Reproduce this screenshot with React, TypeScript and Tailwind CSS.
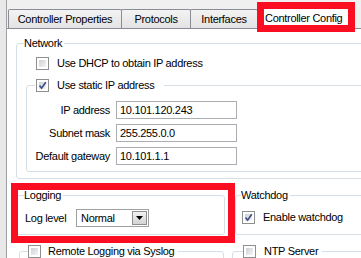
import React from "react";

const Check = ({ checked }: { checked?: boolean }) => (
  <div className="relative w-[13px] h-[13px] shrink-0 border border-[#8e8f8f] bg-white p-[2px]">
    <div className="w-full h-full bg-linear-to-br from-[#cdd0d5] to-[#f5f5f5]" />
    {checked && (
      <svg className="absolute left-0 top-0" width="11" height="11" viewBox="0 0 11 11">
        <path d="M2.5 5.5 L4.6 8.2 L8.8 2.3" fill="none" stroke="#3c5187" strokeWidth="1.7" />
      </svg>
    )}
  </div>
);

const Field = ({ label, value }: { label: string; value: string }) => (
  <div className="flex items-center h-[18px]">
    <span className="w-[83px] text-right">{label}</span>
    <div className="ml-[6px] w-[121px] h-[18px] border border-[#abadb3] bg-white pl-[3px] flex items-center">
      {value}
    </div>
  </div>
);

const Tab = ({ label, w }: { label: string; w: string }) => (
  <div
    className={`${w} h-[19px] -mr-px border border-b-0 border-[#898c95] rounded-t-[2px] bg-linear-to-b from-[#f3f3f3] to-[#e3e3e3] flex items-center justify-center`}
  >
    {label}
  </div>
);

export default function App() {
  return (
    <div className="relative w-[361px] h-[258px] overflow-hidden bg-[#f0f0f0] text-black text-[11px] leading-[13px] tracking-[-0.3px] font-['Liberation_Sans',Arial,sans-serif]">
      <div className="flex h-full">
        <div className="w-[7px] shrink-0 border-r border-[#a0a0a0] bg-[#e8e8e8]" />
        <div className="flex-1 flex flex-col min-w-0">
          <div className="h-[28px] shrink-0 flex items-end pl-[1px]">
            <Tab label="Controller Properties" w="w-[114px]" />
            <Tab label="Protocols" w="w-[70px]" />
            <Tab label="Interfaces" w="w-[68px]" />
            <div className="w-[98px] h-[23px] -mb-px border border-b-0 border-[#898c95] bg-white flex items-center pl-[7px]">
              Controller Config
            </div>
          </div>
          <div className="flex-1 bg-white border-t border-[#898c95] overflow-hidden">
            <div className="w-[420px]">
              {/* Network */}
              <fieldset className="ml-[9px] mt-[8px] border border-[#d5dfe5] rounded-[3px] pb-[6px]">
                <legend className="ml-[7px] pr-[2px]">Network</legend>
                <div className="mt-[7px] pl-[19px] flex items-center gap-[8px]">
                  <Check />
                  <span>Use DHCP to obtain IP address</span>
                </div>
                <fieldset className="ml-[9px] mt-[9px] border border-[#d5dfe5] rounded-[3px] pb-[6px]">
                  <legend className="ml-[8px] pl-px pr-[10px]">
                    <div className="flex items-center gap-[8px]">
                      <Check checked />
                      <span>Use static IP address</span>
                    </div>
                  </legend>
                  <div className="pt-[9px] flex flex-col gap-[5px]">
                    <Field label="IP address" value="10.101.120.243" />
                    <Field label="Subnet mask" value="255.255.0.0" />
                    <Field label="Default gateway" value="10.101.1.1" />
                  </div>
                </fieldset>
              </fieldset>

              {/* Logging / Watchdog */}
              <div className="flex mt-[10px]">
                <fieldset className="ml-[9px] w-[209px] border border-[#d5dfe5] rounded-[3px] pb-[7px]">
                  <legend className="ml-[7px] pr-[2px]">Logging</legend>
                  <div className="mt-[7px] pl-[8px] flex items-center">
                    <span className="w-[51px]">Log level</span>
                    <div className="w-[73px] h-[18px] border border-[#a0a0a0] bg-white flex items-center pl-[4px] pr-px">
                      <span className="flex-1">Normal</span>
                      <div className="w-[15px] h-[14px] border border-[#8e8f8f] bg-linear-to-b from-[#f2f2f2] to-[#d4d4d4] flex items-center justify-center">
                        <svg width="7" height="4" viewBox="0 0 7 4">
                          <path d="M0 0 H7 L3.5 4 Z" fill="#000" />
                        </svg>
                      </div>
                    </div>
                  </div>
                </fieldset>
                <fieldset className="ml-[10px] flex-1 border border-[#d5dfe5] rounded-[3px]">
                  <legend className="ml-[5px] pr-[2px]">Watchdog</legend>
                  <div className="mt-[9px] pl-[6px] flex items-center gap-[8px]">
                    <Check checked />
                    <span>Enable watchdog</span>
                  </div>
                </fieldset>
              </div>

              {/* Remote logging / NTP */}
              <div className="flex mt-[10px]">
                <fieldset className="ml-[12px] w-[205px] h-[40px] border border-[#d5dfe5] rounded-[3px]">
                  <legend className="ml-[8px] pr-[4px]">
                    <div className="flex items-center gap-[7px]">
                      <Check />
                      <span>Remote Logging via Syslog</span>
                    </div>
                  </legend>
                </fieldset>
                <fieldset className="ml-[8px] flex-1 h-[40px] border border-[#d5dfe5] rounded-[3px]">
                  <legend className="ml-[10px] pr-[4px]">
                    <div className="flex items-center gap-[8px]">
                      <Check />
                      <span>NTP Server</span>
                    </div>
                  </legend>
                </fieldset>
              </div>
            </div>
          </div>
        </div>
      </div>

      {/* red annotation boxes */}
      <div className="absolute left-[257px] top-[2px] w-[98px] h-[30px] border-[7px] border-[#fb0e22]" />
      <div className="absolute left-[11px] top-[183px] w-[224px] h-[60px] border-[7px] border-[#fb0e22]" />
    </div>
  );
}
